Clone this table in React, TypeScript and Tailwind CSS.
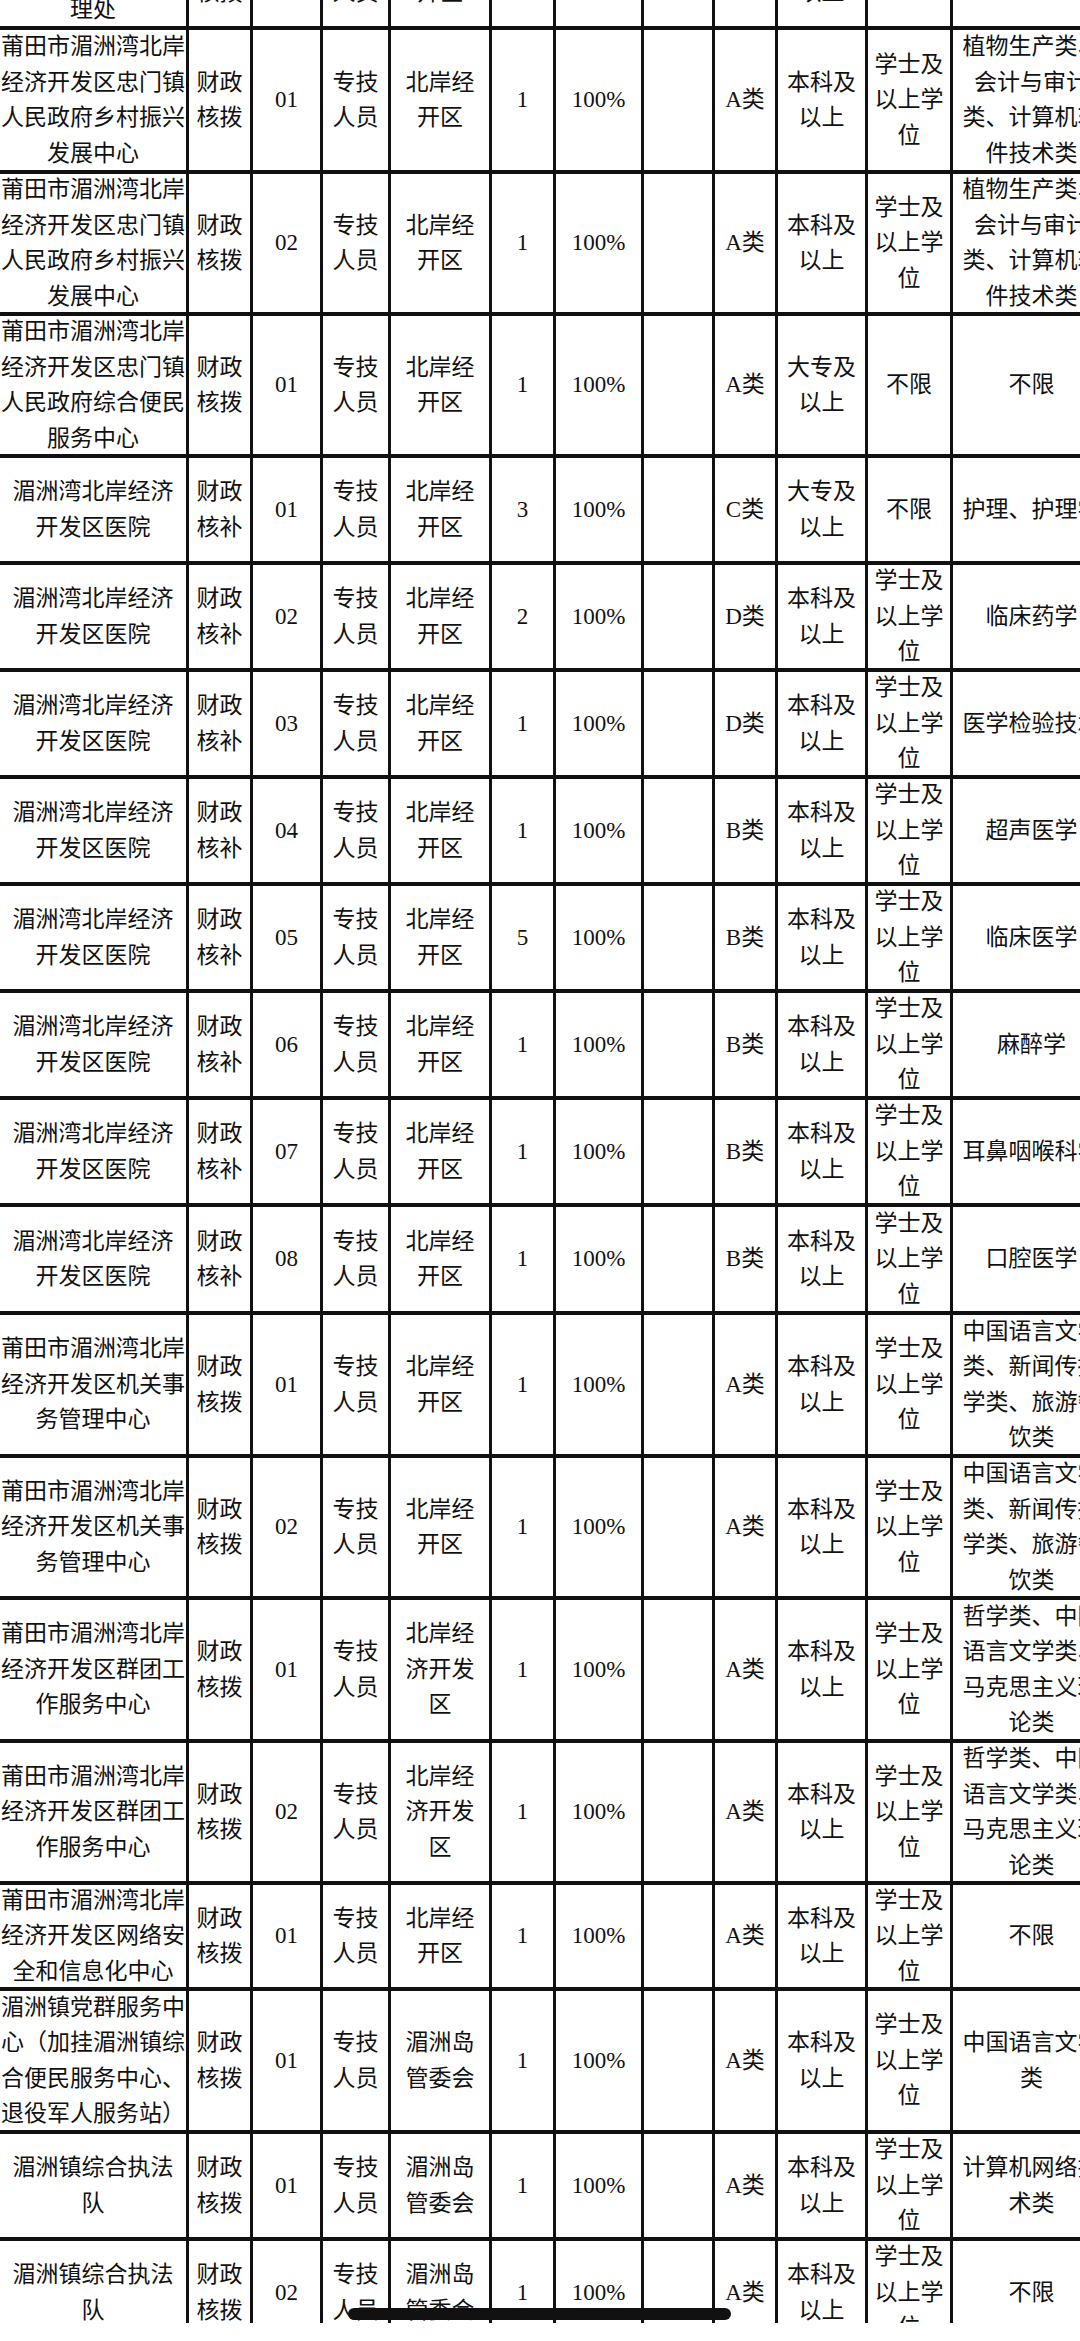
import React from "react";

type Row = { h: string; cells: string[][] };

const colW = [
  "w-[189px]",
  "w-[64px]",
  "w-[70px]",
  "w-[68px]",
  "w-[101px]",
  "w-[64px]",
  "w-[88px]",
  "w-[71px]",
  "w-[63px]",
  "w-[90px]",
  "w-[85px]",
  "w-[160px]",
];

const bk = ["财政", "核拨"];
const bb = ["财政", "核补"];
const zj = ["专技", "人员"];
const kq = ["北岸经", "开区"];
const bk9 = ["本科及", "以上"];
const xs = ["学士及", "以上学", "位"];
const hosp = ["湄洲湾北岸经济", "开发区医院"];
const jg = ["莆田市湄洲湾北岸", "经济开发区机关事", "务管理中心"];
const qt = ["莆田市湄洲湾北岸", "经济开发区群团工", "作服务中心"];
const zx = ["莆田市湄洲湾北岸", "经济开发区忠门镇", "人民政府乡村振兴", "发展中心"];
const mzd = ["湄洲岛", "管委会"];
const zf = ["湄洲镇综合执法", "队"];

const rows: Row[] = [
  { h: "h-[144px]", cells: [zx, bk, ["01"], zj, kq, ["1"], ["100%"], [], ["A类"], bk9, xs, ["植物生产类、", "会计与审计", "类、计算机软", "件技术类"]] },
  { h: "h-[142px]", cells: [zx, bk, ["02"], zj, kq, ["1"], ["100%"], [], ["A类"], bk9, xs, ["植物生产类、", "会计与审计", "类、计算机软", "件技术类"]] },
  { h: "h-[142px]", cells: [["莆田市湄洲湾北岸", "经济开发区忠门镇", "人民政府综合便民", "服务中心"], bk, ["01"], zj, kq, ["1"], ["100%"], [], ["A类"], ["大专及", "以上"], ["不限"], ["不限"]] },
  { h: "h-[107px]", cells: [hosp, bb, ["01"], zj, kq, ["3"], ["100%"], [], ["C类"], ["大专及", "以上"], ["不限"], ["护理、护理学"]] },
  { h: "h-[107px]", cells: [hosp, bb, ["02"], zj, kq, ["2"], ["100%"], [], ["D类"], bk9, xs, ["临床药学"]] },
  { h: "h-[107px]", cells: [hosp, bb, ["03"], zj, kq, ["1"], ["100%"], [], ["D类"], bk9, xs, ["医学检验技术"]] },
  { h: "h-[107px]", cells: [hosp, bb, ["04"], zj, kq, ["1"], ["100%"], [], ["B类"], bk9, xs, ["超声医学"]] },
  { h: "h-[107px]", cells: [hosp, bb, ["05"], zj, kq, ["5"], ["100%"], [], ["B类"], bk9, xs, ["临床医学"]] },
  { h: "h-[107px]", cells: [hosp, bb, ["06"], zj, kq, ["1"], ["100%"], [], ["B类"], bk9, xs, ["麻醉学"]] },
  { h: "h-[107px]", cells: [hosp, bb, ["07"], zj, kq, ["1"], ["100%"], [], ["B类"], bk9, xs, ["耳鼻咽喉科学"]] },
  { h: "h-[108px]", cells: [hosp, bb, ["08"], zj, kq, ["1"], ["100%"], [], ["B类"], bk9, xs, ["口腔医学"]] },
  { h: "h-[143px]", cells: [jg, bk, ["01"], zj, kq, ["1"], ["100%"], [], ["A类"], bk9, xs, ["中国语言文学", "类、新闻传播", "学类、旅游餐", "饮类"]] },
  { h: "h-[142px]", cells: [jg, bk, ["02"], zj, kq, ["1"], ["100%"], [], ["A类"], bk9, xs, ["中国语言文学", "类、新闻传播", "学类、旅游餐", "饮类"]] },
  { h: "h-[143px]", cells: [qt, bk, ["01"], zj, ["北岸经", "济开发", "区"], ["1"], ["100%"], [], ["A类"], bk9, xs, ["哲学类、中国", "语言文学类、", "马克思主义理", "论类"]] },
  { h: "h-[142px]", cells: [qt, bk, ["02"], zj, ["北岸经", "济开发", "区"], ["1"], ["100%"], [], ["A类"], bk9, xs, ["哲学类、中国", "语言文学类、", "马克思主义理", "论类"]] },
  { h: "h-[106px]", cells: [["莆田市湄洲湾北岸", "经济开发区网络安", "全和信息化中心"], bk, ["01"], zj, kq, ["1"], ["100%"], [], ["A类"], bk9, xs, ["不限"]] },
  { h: "h-[143px]", cells: [["湄洲镇党群服务中", "心（加挂湄洲镇综", "合便民服务中心、", "退役军人服务站）"], bk, ["01"], zj, mzd, ["1"], ["100%"], [], ["A类"], bk9, xs, ["中国语言文学", "类"]] },
  { h: "h-[107px]", cells: [zf, bk, ["01"], zj, mzd, ["1"], ["100%"], [], ["A类"], bk9, xs, ["计算机网络技", "术类"]] },
  { h: "h-[107px]", cells: [zf, bk, ["02"], zj, mzd, ["1"], ["100%"], [], ["A类"], bk9, xs, ["不限"]] },
];

const topRow: string[][] = [
  ["莆田市湄洲湾北岸", "经济开发区城市管", "理处"],
  bk,
  ["01"],
  zj,
  kq,
  ["1"],
  ["100%"],
  [],
  ["A类"],
  bk9,
  ["不限"],
  ["不限"],
];

function Cells({ cells }: { cells: string[][] }) {
  return (
    <>
      {cells.map((lines, i) => (
        <div
          key={i}
          className={`${colW[i]} shrink-0 h-full flex flex-col items-center justify-center text-center border-r-[3px] border-[#111]`}
        >
          {lines.map((l, j) => (
            <div key={j} className="whitespace-nowrap">
              {l}
            </div>
          ))}
        </div>
      ))}
    </>
  );
}

export default function App() {
  return (
    <div className="relative w-[1080px] h-[2341px] overflow-hidden bg-white text-[#111] text-[23px] leading-[35.5px] font-['Liberation_Serif','Noto_Sans_CJK_SC',serif]">
      <div className="h-[2323px] overflow-hidden">
        <div className="flex h-[107px] -mt-[77px] border-b-4 border-[#111] w-[1113px]">
          <Cells cells={topRow} />
        </div>
        {rows.map((r, i) => (
          <div key={i} className={`flex ${r.h} border-b-4 border-[#111] w-[1113px]`}>
            <Cells cells={r.cells} />
          </div>
        ))}
      </div>
      <div className="absolute left-[348px] top-[2308px] w-[383px] h-[12px] rounded-full bg-[#111]" />
    </div>
  );
}
